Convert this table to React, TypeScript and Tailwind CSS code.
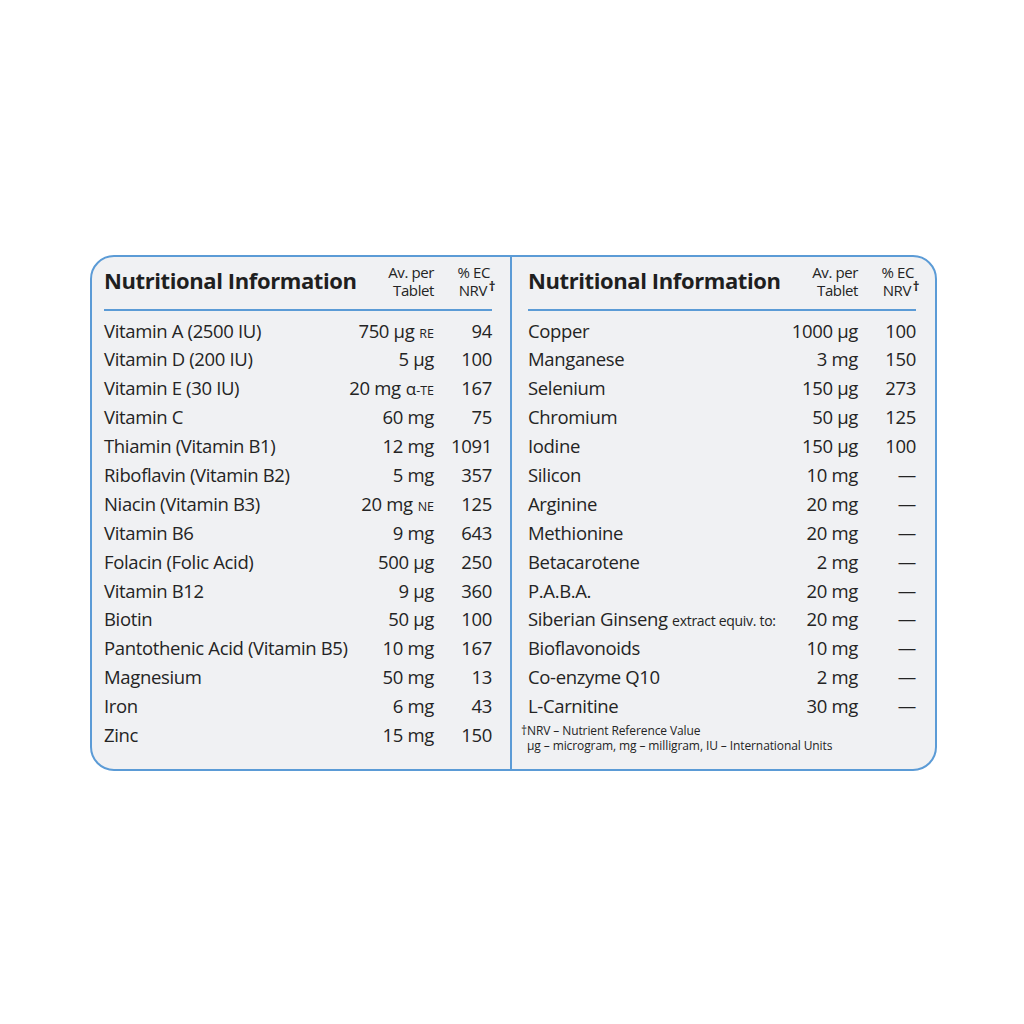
import React from "react";

type Row = { name: React.ReactNode; amt: string; unit?: React.ReactNode; nrv: string };

const left: Row[] = [
  { name: "Vitamin A (2500 IU)", amt: "750 µg", unit: "RE", nrv: "94" },
  { name: "Vitamin D (200 IU)", amt: "5 µg", nrv: "100" },
  {
    name: "Vitamin E (30 IU)",
    amt: "20 mg",
    unit: (
      <>
        <span className="text-[17px]">α</span>-TE
      </>
    ),
    nrv: "167",
  },
  { name: "Vitamin C", amt: "60 mg", nrv: "75" },
  { name: "Thiamin (Vitamin B1)", amt: "12 mg", nrv: "1091" },
  { name: "Riboflavin (Vitamin B2)", amt: "5 mg", nrv: "357" },
  { name: "Niacin (Vitamin B3)", amt: "20 mg", unit: "NE", nrv: "125" },
  { name: "Vitamin B6", amt: "9 mg", nrv: "643" },
  { name: "Folacin (Folic Acid)", amt: "500 µg", nrv: "250" },
  { name: "Vitamin B12", amt: "9 µg", nrv: "360" },
  { name: "Biotin", amt: "50 µg", nrv: "100" },
  { name: "Pantothenic Acid (Vitamin B5)", amt: "10 mg", nrv: "167" },
  { name: "Magnesium", amt: "50 mg", nrv: "13" },
  { name: "Iron", amt: "6 mg", nrv: "43" },
  { name: "Zinc", amt: "15 mg", nrv: "150" },
];

const right: Row[] = [
  { name: "Copper", amt: "1000 µg", nrv: "100" },
  { name: "Manganese", amt: "3 mg", nrv: "150" },
  { name: "Selenium", amt: "150 µg", nrv: "273" },
  { name: "Chromium", amt: "50 µg", nrv: "125" },
  { name: "Iodine", amt: "150 µg", nrv: "100" },
  { name: "Silicon", amt: "10 mg", nrv: "—" },
  { name: "Arginine", amt: "20 mg", nrv: "—" },
  { name: "Methionine", amt: "20 mg", nrv: "—" },
  { name: "Betacarotene", amt: "2 mg", nrv: "—" },
  { name: "P.A.B.A.", amt: "20 mg", nrv: "—" },
  {
    name: (
      <>
        Siberian Ginseng <span className="text-[14px] tracking-[-0.3px]">extract equiv. to:</span>
      </>
    ),
    amt: "20 mg",
    nrv: "—",
  },
  { name: "Bioflavonoids", amt: "10 mg", nrv: "—" },
  { name: "Co-enzyme Q10", amt: "2 mg", nrv: "—" },
  { name: "L-Carnitine", amt: "30 mg", nrv: "—" },
];

function Header() {
  return (
    <div className="flex items-center h-[54px] border-b-2 border-[#5b9bd6]">
      <div className="flex-1 text-[22px] font-bold tracking-[-0.4px] text-[#1f1f1f] -mt-[6px]">
        Nutritional Information
      </div>
      <div className="text-right text-[15px] leading-[18px] tracking-[-0.4px] -mt-[4px]">
        <div>Av. per</div>
        <div>Tablet</div>
      </div>
      <div className="w-[58px] text-right text-[15px] leading-[18px] tracking-[-0.4px] -mt-[4px]">
        <div className="pr-[2px]">% EC</div>
        <div className="relative pr-[5px]">
          NRV<span className="absolute right-[-3px] top-[-4px] text-[13px] font-bold">†</span>
        </div>
      </div>
    </div>
  );
}

function Rows({ rows }: { rows: Row[] }) {
  return (
    <div className="pt-[5px]">
      {rows.map((r, i) => (
        <div key={i} className="flex items-center h-[28.9px] text-[18.5px] tracking-[-0.35px]">
          <div className="flex-1 whitespace-nowrap">{r.name}</div>
          <div className="text-right whitespace-nowrap">
            {r.amt}
            {r.unit && <span className="text-[12.5px] ml-[5px] tracking-[0px]">{r.unit}</span>}
          </div>
          <div className="w-[58px] text-right">{r.nrv}</div>
        </div>
      ))}
    </div>
  );
}

export default function App() {
  return (
    <div
      className="w-[1024px] h-[1024px] bg-white text-[#242424]"
      style={{ fontFamily: '"Open Sans", "Noto Sans", sans-serif' }}
    >
      <div className="pt-[255px] pl-[90px]">
        <div className="w-[847px] h-[516px] border-2 border-[#5b9bd6] rounded-[24px] bg-[#f0f1f3] flex overflow-hidden">
          <div className="w-[420px] border-r-2 border-[#5b9bd6] pl-[12px] pr-[18px]">
            <Header />
            <Rows rows={left} />
          </div>
          <div className="flex-1 pl-[16px] pr-[19px]">
            <Header />
            <Rows rows={right} />
            <div className="text-[12px] leading-[15px] tracking-[-0.1px] mt-[3px]">
              <div className="-ml-[7px]">†NRV – Nutrient Reference Value</div>
              <div className="-ml-[1px]">µg – microgram, mg – milligram, IU – International Units</div>
            </div>
          </div>
        </div>
      </div>
    </div>
  );
}
